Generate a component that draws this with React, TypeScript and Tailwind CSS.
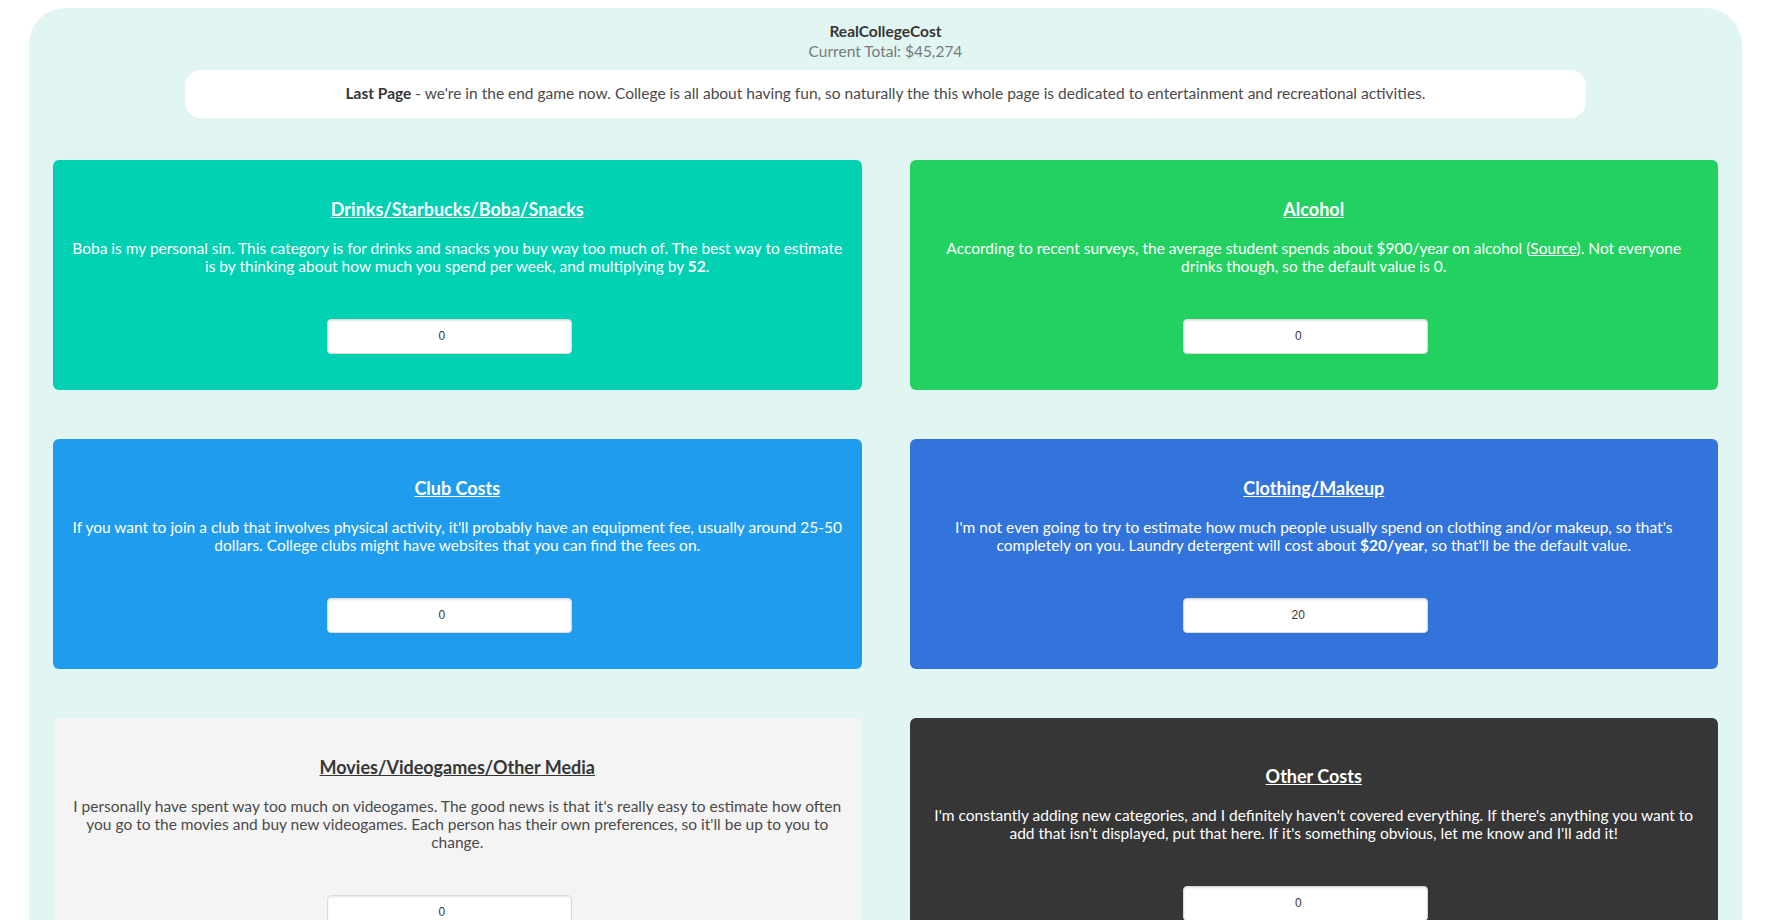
import React from "react";

type Category = {
  title: string;
  body: React.ReactNode;
  value: string;
  tone: string;
  titleTone: string;
};

const categories: Category[] = [
  {
    title: "Drinks/Starbucks/Boba/Snacks",
    body: (
      <>
        Boba is my personal sin. This category is for drinks and snacks you buy way too much of. The best way to estimate
        is by thinking about how much you spend per week, and multiplying by <strong>52</strong>.
      </>
    ),
    value: "0",
    tone: "bg-[#00d1b2] text-white",
    titleTone: "text-white",
  },
  {
    title: "Alcohol",
    body: (
      <>
        According to recent surveys, the average student spends about $900/year on alcohol (
        <a href="#" className="underline">
          Source
        </a>
        ). Not everyone drinks though, so the default value is 0.
      </>
    ),
    value: "0",
    tone: "bg-[#23d160] text-white",
    titleTone: "text-white",
  },
  {
    title: "Club Costs",
    body: (
      <>
        If you want to join a club that involves physical activity, it'll probably have an equipment fee, usually around
        25-50 dollars. College clubs might have websites that you can find the fees on.
      </>
    ),
    value: "0",
    tone: "bg-[#209cee] text-white",
    titleTone: "text-white",
  },
  {
    title: "Clothing/Makeup",
    body: (
      <>
        I'm not even going to try to estimate how much people usually spend on clothing and/or makeup, so that's
        completely on you. Laundry detergent will cost about <strong>$20/year</strong>, so that'll be the default value.
      </>
    ),
    value: "20",
    tone: "bg-[#3273dc] text-white",
    titleTone: "text-white",
  },
  {
    title: "Movies/Videogames/Other Media",
    body: (
      <>
        I personally have spent way too much on videogames. The good news is that it's really easy to estimate how often
        you go to the movies and buy new videogames. Each person has their own preferences, so it'll be up to you to
        change.
      </>
    ),
    value: "0",
    tone: "bg-[#f4f4f4] text-[#4a4a4a]",
    titleTone: "text-[#363636]",
  },
  {
    title: "Other Costs",
    body: (
      <>
        I'm constantly adding new categories, and I definitely haven't covered everything. If there's anything you want
        to add that isn't displayed, put that here. If it's something obvious, let me know and I'll add it!
      </>
    ),
    value: "0",
    tone: "bg-[#363636] text-white",
    titleTone: "text-white",
  },
];

function CostCard({ item }: { item: Category }) {
  return (
    <div className={`flex flex-col justify-center rounded-md px-[15px] pt-[35px] pb-9 text-center ${item.tone}`}>
      <h2 className={`text-[18px] font-bold leading-[28px] underline ${item.titleTone}`}>{item.title}</h2>
      <p className="mt-4 text-[15.5px] leading-[18.4px]">{item.body}</p>
      <div className="mt-[43px] flex justify-center">
        <input
          type="number"
          defaultValue={item.value}
          className="mr-4 h-[35px] w-[245px] rounded-[4px] border border-[#dbdbdb] bg-white text-center text-[12px] text-[#363636] shadow-[inset_0_1px_2px_rgba(10,10,10,0.1)]"
          style={{ fontFamily: '"Liberation Sans", Arial, sans-serif' }}
        />
      </div>
    </div>
  );
}

export default function App() {
  return (
    <div
      className="w-[1772px] bg-white pt-2 pl-[29px]"
      style={{ fontFamily: 'Lato, "Open Sans", sans-serif' }}
    >
      <div className="w-[1713px] rounded-[36px] bg-[#e1f5f2] px-6 pt-[13px] pb-10">
        <div className="text-center">
          <div className="text-[15.5px] font-bold leading-5 text-[#363636]">RealCollegeCost</div>
          <div className="text-[15.5px] leading-5 text-[#7a7a7a]">Current Total: $45,274</div>
        </div>
        <div className="mx-auto mt-[9px] flex h-12 w-[1401px] items-center justify-center rounded-2xl bg-white text-[15.5px] text-[#4a4a4a]">
          <p>
            <strong className="text-[#363636]">Last Page</strong> - we're in the end game now. College is all about
            having fun, so naturally the this whole page is dedicated to entertainment and recreational activities.
          </p>
        </div>
        <div className="mt-[42px] grid grid-cols-2 gap-x-12 gap-y-[49px]">
          {categories.map((item) => (
            <CostCard key={item.title} item={item} />
          ))}
        </div>
      </div>
    </div>
  );
}
